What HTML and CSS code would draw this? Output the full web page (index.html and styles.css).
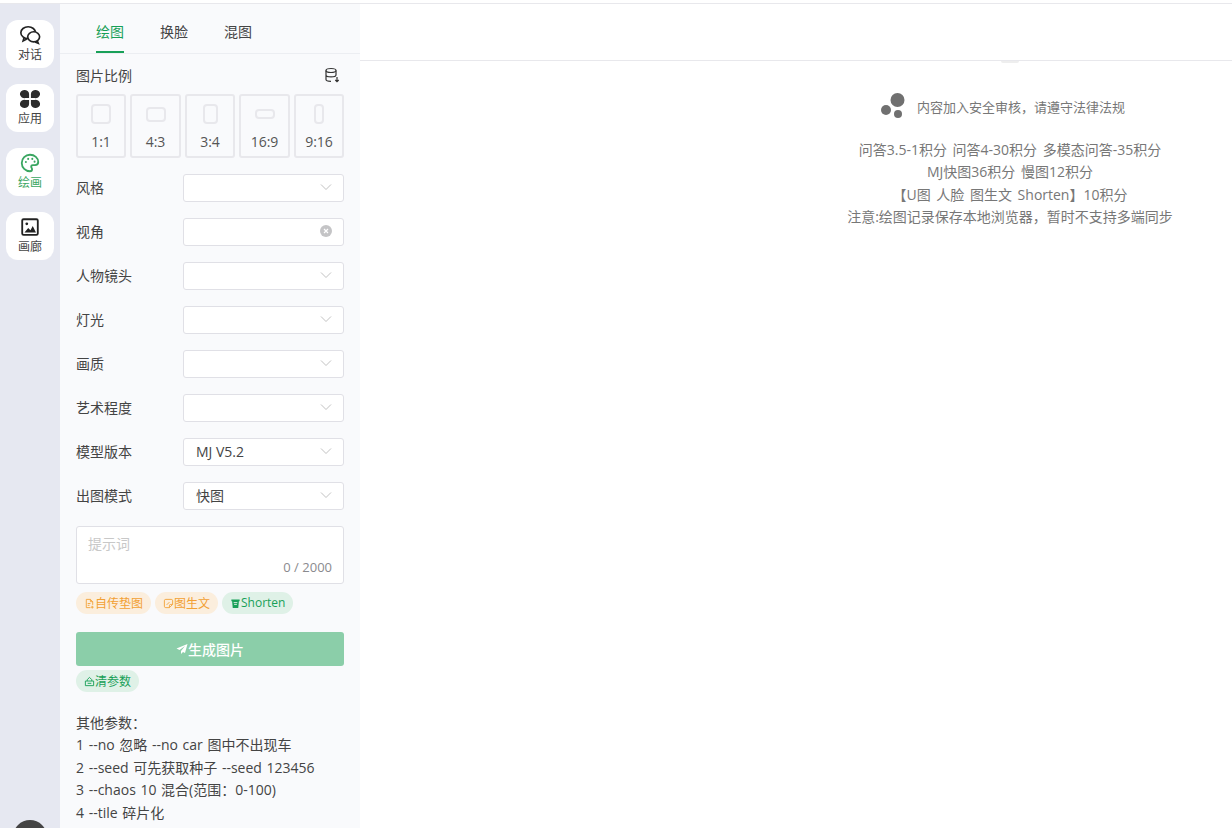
FILE: index.html
```html
<!DOCTYPE HTML>
<html>
    <head>
        <meta charset="UTF-8">
        <title>绘图</title>
        <link rel="stylesheet" href="styles.css">
    </head>
    <body>
        <div id="wrap">
            <!--左侧菜单-->
            <div class="sider">
                <div class="navItem">
                    <svg class="navIcon" viewBox="0 0 24 24" fill="none" stroke="#222" stroke-width="1.800"><ellipse cx="10" cy="9.500" rx="8" ry="6.500"/><path d="M5.500 15l-1 3.500 4-2"/><ellipse cx="16" cy="14" rx="6.500" ry="5.500" fill="#fff"/><path d="M20 18.500l1 2.500-3.500-1.500"/></svg>
                    <span>对话</span>
                </div>
                <div class="navItem">
                    <svg class="navIcon" viewBox="0 0 24 24" fill="#2b2b2b"><path d="M11 11H7A5 4.500 0 1 1 11 6.500z"/><path d="M13 11h4A5 4.500 0 1 0 13 6.500z"/><path d="M11 13H7A5 4.500 0 1 0 11 17.500z"/><path d="M13 13h4A5 4.500 0 1 1 13 17.500z"/></svg>
                    <span>应用</span>
                </div>
                <div class="navItem active">
                    <svg class="navIcon" viewBox="0 0 24 24" fill="none" stroke="#3aa661" stroke-width="2"><path d="M12 3a9 9 0 1 0 0 18c1.500 0 2.300-1 2.300-2.100 0-1.300-1-1.800-1-2.900 0-1 .8-1.700 1.900-1.700h2.300c2 0 3.500-1.300 3.500-3.300C21 6.500 17 3 12 3z"/><circle cx="7.500" cy="11" r="1.100" fill="#3aa661" stroke="none"/><circle cx="10" cy="7.500" r="1.100" fill="#3aa661" stroke="none"/><circle cx="14.500" cy="7.500" r="1.100" fill="#3aa661" stroke="none"/><circle cx="17" cy="10.500" r="1.100" fill="#3aa661" stroke="none"/></svg>
                    <span>绘画</span>
                </div>
                <div class="navItem">
                    <svg class="navIcon" viewBox="0 0 24 24" fill="none"><rect x="3.500" y="3.500" width="17" height="17" rx="1.500" stroke="#222" stroke-width="2"/><circle cx="8.500" cy="8.500" r="1.500" fill="#222"/><path d="M6 18l4-5 2.500 2.500L15 11l3.500 7z" fill="#222"/></svg>
                    <span>画廊</span>
                </div>
                <div class="avatar"></div>
            </div>

            <!--绘图参数-->
            <div class="panel">
                <div class="tabs">
                    <p class="tab active">绘图</p>
                    <p class="tab">换脸</p>
                    <p class="tab">混图</p>
                </div>
                <div class="form">
                    <div class="ratioHead">
                        <span>图片比例</span>
                        <svg class="dbIcon" viewBox="0 0 16 16" fill="none" stroke="#333" stroke-width="1.200"><ellipse cx="7" cy="3.500" rx="5" ry="2"/><path d="M2 3.500v9c0 1 2 1.800 5 1.800M12 3.500V8M2 8c0 1 2 1.900 5 1.900s5-.9 5-1.900"/><path d="M13 10v4.500M11.300 13l1.700 1.700 1.700-1.700"/></svg>
                    </div>
                    <div class="ratios">
                        <div class="ratio"><i class="shape s11"></i><span>1:1</span></div>
                        <div class="ratio"><i class="shape s43"></i><span>4:3</span></div>
                        <div class="ratio"><i class="shape s34"></i><span>3:4</span></div>
                        <div class="ratio"><i class="shape s169"></i><span>16:9</span></div>
                        <div class="ratio"><i class="shape s916"></i><span>9:16</span></div>
                    </div>

                    <div class="row"><label>风格</label><div class="select"><span></span><svg class="arrow" viewBox="0 0 12 12"><path d="M1 3.500l5 5 5-5"/></svg></div></div>
                    <div class="row"><label>视角</label><div class="select"><span></span><svg class="clear" viewBox="0 0 12 12"><circle cx="6" cy="6" r="6" fill="#c4c4c6"/><path d="M4 4l4 4M8 4l-4 4" stroke="#fff" stroke-width="1.200"/></svg></div></div>
                    <div class="row"><label>人物镜头</label><div class="select"><span></span><svg class="arrow" viewBox="0 0 12 12"><path d="M1 3.500l5 5 5-5"/></svg></div></div>
                    <div class="row"><label>灯光</label><div class="select"><span></span><svg class="arrow" viewBox="0 0 12 12"><path d="M1 3.500l5 5 5-5"/></svg></div></div>
                    <div class="row"><label>画质</label><div class="select"><span></span><svg class="arrow" viewBox="0 0 12 12"><path d="M1 3.500l5 5 5-5"/></svg></div></div>
                    <div class="row"><label>艺术程度</label><div class="select"><span></span><svg class="arrow" viewBox="0 0 12 12"><path d="M1 3.500l5 5 5-5"/></svg></div></div>
                    <div class="row"><label>模型版本</label><div class="select"><span>MJ V5.2</span><svg class="arrow" viewBox="0 0 12 12"><path d="M1 3.500l5 5 5-5"/></svg></div></div>
                    <div class="row"><label>出图模式</label><div class="select"><span>快图</span><svg class="arrow" viewBox="0 0 12 12"><path d="M1 3.500l5 5 5-5"/></svg></div></div>

                    <div class="prompt">
                        <p class="placeholder">提示词</p>
                        <p class="count">0 / 2000</p>
                    </div>

                    <div class="tags">
                        <div class="tag orange">
                            <svg viewBox="0 0 12 12" fill="none" stroke="#f2a33a"><path d="M7 10.500H2.500v-9h4.500l2.500 2.500v3.500M7 1.500V4h2.500M4 6h3M4 8h2M9 8.500v3M7.500 10h3"/></svg>
                            <span>自传垫图</span>
                        </div>
                        <div class="tag orange">
                            <svg viewBox="0 0 12 12" fill="none" stroke="#f2a33a"><path d="M10.500 7V3a1.500 1.500 0 0 0-1.500-1.500H3A1.500 1.500 0 0 0 1.500 3v6A1.500 1.500 0 0 0 3 10.500h4z"/><path d="M10.500 7H8.500A1.500 1.500 0 0 0 7 8.500v2"/><path d="M4 7.500l3-3"/></svg>
                            <span>图生文</span>
                        </div>
                        <div class="tag green">
                            <svg viewBox="0 0 12 12" fill="#18a058"><path d="M1.500 1.500h9v2h-.8l-.7 7.500H3L2.300 3.500h-.8z"/><path d="M4 5h4M4.500 7h3" stroke="#dff1e7" fill="none"/></svg>
                            <span>Shorten</span>
                        </div>
                    </div>

                    <div class="submit">
                        <svg viewBox="0 0 12 12" fill="#fff"><path d="M11.500 1L.5 5.500l3 1.600L9 3 5 8v3l2-2 2 1z"/></svg>
                        <span>生成图片</span>
                    </div>

                    <div class="tags tagsClear">
                        <div class="tag green">
                            <svg viewBox="0 0 12 12" fill="none" stroke="#18a058"><path d="M1.500 10.500h9v-5h-9zM3.500 5.500V4l2.500-2.500L8.500 4v1.500M4 8h4"/></svg>
                            <span>清参数</span>
                        </div>
                    </div>

                    <div class="notes">
                        <p>其他参数：</p>
                        <p>1 --no 忽略 --no car 图中不出现车</p>
                        <p>2 --seed 可先获取种子 --seed 123456</p>
                        <p>3 --chaos 10 混合(范围：0-100)</p>
                        <p>4 --tile 碎片化</p>
                    </div>
                </div>
            </div>

            <!--右侧内容-->
            <div class="main">
                <div class="mainHead"><i class="handle"></i></div>
                <div class="intro">
                    <div class="notice">
                        <svg class="dots" viewBox="0 0 24 26" fill="#707070"><circle cx="16.500" cy="7" r="7"/><circle cx="5" cy="17" r="5"/><circle cx="17" cy="21" r="4"/></svg>
                        <span>内容加入安全审核，请遵守法律法规</span>
                    </div>
                    <div class="prices">
                        <p>问答3.5-1积分 问答4-30积分 多模态问答-35积分</p>
                        <p>MJ快图36积分 慢图12积分</p>
                        <p>【U图 人脸 图生文 Shorten】10积分</p>
                        <p>注意:绘图记录保存本地浏览器，暂时不支持多端同步</p>
                    </div>
                </div>
            </div>
        </div>
    </body>
</html>
```

FILE: styles.css
```css
html,body{height:100%;}
body{
    margin:0;
    font-family:"Open Sans","Noto Sans CJK SC",sans-serif;
    font-size:13px;
    color:#333;
    overflow:hidden;
    background:#fff;
}
p{margin:0;}
i{display:block;}
#wrap{
    height:824px;
    margin-top:3px;
    border-top:1px solid #e8e8ec;
    display:flex;
    overflow:hidden;
}

/*左侧菜单*/
.sider{
    position:relative;
    width:60px;
    flex:none;
    padding:16px 6px 0;
    box-sizing:border-box;
    background:#e6e8f1;
    display:flex;
    flex-direction:column;
    gap:16px;
}
.navItem{
    height:48px;
    background:#fff;
    border-radius:12px;
    display:flex;
    flex-direction:column;
    align-items:center;
    padding-top:4px;
    box-sizing:border-box;
    font-size:12px;
    line-height:16px;
    color:#444;
}
.navItem.active{color:#3aa661;}
.navIcon{width:22px;height:22px;margin-bottom:1px;}
.avatar{
    position:absolute;
    left:13px;
    top:816px;
    width:34px;
    height:34px;
    border-radius:50%;
    background:#444;
}

/*绘图参数*/
.panel{
    width:300px;
    flex:none;
    background:#f9fafc;
}
.tabs{
    height:49px;
    padding-left:36px;
    border-bottom:1px solid #eceef2;
    display:flex;
    gap:36px;
}
.tab{
    width:28px;
    height:49px;
    box-sizing:border-box;
    padding-top:16px;
    font-size:14px;
    line-height:24px;
    color:#444;
    white-space:nowrap;
}
.tab.active{
    color:#18a058;
    border-bottom:2px solid #18a058;
}
.form{padding:0 16px;}
.ratioHead{
    height:40px;
    display:flex;
    align-items:center;
    justify-content:space-between;
    padding:2px 4px 0 0;
    box-sizing:border-box;
    font-size:14px;
    color:#444;
}
.dbIcon{width:16px;height:16px;}
.ratios{
    display:flex;
    justify-content:space-between;
    margin-bottom:16px;
}
.ratio{
    width:50px;
    height:64px;
    box-sizing:border-box;
    border:2px solid #e8e8ec;
    border-radius:3px;
    display:flex;
    flex-direction:column;
    align-items:center;
    font-size:14px;
    color:#555;
}
.ratio:nth-child(even){width:51px;}
.ratio span{
    line-height:20px;
    margin-top:auto;
    margin-bottom:4px;
}
.shape{
    border:2px solid #e8e8ec;
    border-radius:4px;
    box-sizing:border-box;
    margin-top:8px;
}
.s11{width:20px;height:20px;}
.s43{width:20px;height:15px;margin-top:11px;}
.s34{width:15px;height:20px;}
.s169{width:20px;height:10px;margin-top:13px;}
.s916{width:10px;height:20px;}
.row{
    display:flex;
    align-items:center;
    justify-content:space-between;
    height:28px;
    margin-bottom:16px;
    font-size:14px;
    color:#444;
}
.row label{padding-bottom:3px;}
.select{
    width:161px;
    height:28px;
    box-sizing:border-box;
    padding:0 11px 2px 12px;
    background:#fff;
    border:1px solid #e0e0e6;
    border-radius:3px;
    display:flex;
    align-items:center;
    justify-content:space-between;
    color:#444;
}
.arrow{width:12px;height:12px;fill:none;stroke:#c2c2c2;stroke-width:1;}
.clear{width:12px;height:12px;}
.prompt{
    height:58px;
    box-sizing:border-box;
    padding:7px 11px 0;
    background:#fff;
    border:1px solid #e0e0e6;
    border-radius:3px;
}
.placeholder{
    font-size:14px;
    line-height:20px;
    color:#c8c8c8;
}
.count{
    margin-top:3px;
    text-align:right;
    font-size:13px;
    line-height:20px;
    color:#8a8a8e;
}
.tags{
    display:flex;
    gap:4px;
    margin-top:8px;
}
.tag{
    height:22px;
    padding:0 8px;
    border-radius:11px;
    display:flex;
    align-items:center;
    font-size:12px;
}
.tag span{padding-bottom:1px;}
.tag svg{width:11px;height:11px;flex:none;}
.orange{background:#fbeedd;color:#f2a033;}
.green{background:#dff1e7;color:#18a058;}
.submit{
    height:34px;
    margin-top:18px;
    padding-bottom:1px;
    box-sizing:border-box;
    border-radius:3px;
    background:#8bcea9;
    color:#fff;
    font-size:14px;
    font-weight:500;
    display:flex;
    align-items:center;
    justify-content:center;
}
.submit svg{width:12px;height:12px;}
.tagsClear{margin-top:4px;}
.notes{
    margin-top:20px;
    font-size:14px;
    line-height:22.400px;
    word-spacing:1px;
    color:#444;
    white-space:nowrap;
}

/*右侧内容*/
.main{
    flex:1;
    min-width:0;
}
.mainHead{
    position:relative;
    height:56px;
    border-bottom:1px solid #e8e8ec;
}
.handle{
    position:absolute;
    left:641px;
    top:57px;
    width:18px;
    height:2px;
    background:#eeeeee;
    border-radius:0 0 4px 4px;
}
.intro{
    width:340px;
    margin:32px 0 0 480px;
    text-align:center;
    color:#777;
}
.notice{
    display:flex;
    align-items:center;
    height:26px;
    padding-left:41px;
    color:#777;
}
.dots{width:24px;height:26px;margin-right:12px;flex:none;}
.prices{
    margin-top:20px;
    font-size:14px;
    line-height:22.400px;
    word-spacing:2px;
    white-space:nowrap;
}
```
